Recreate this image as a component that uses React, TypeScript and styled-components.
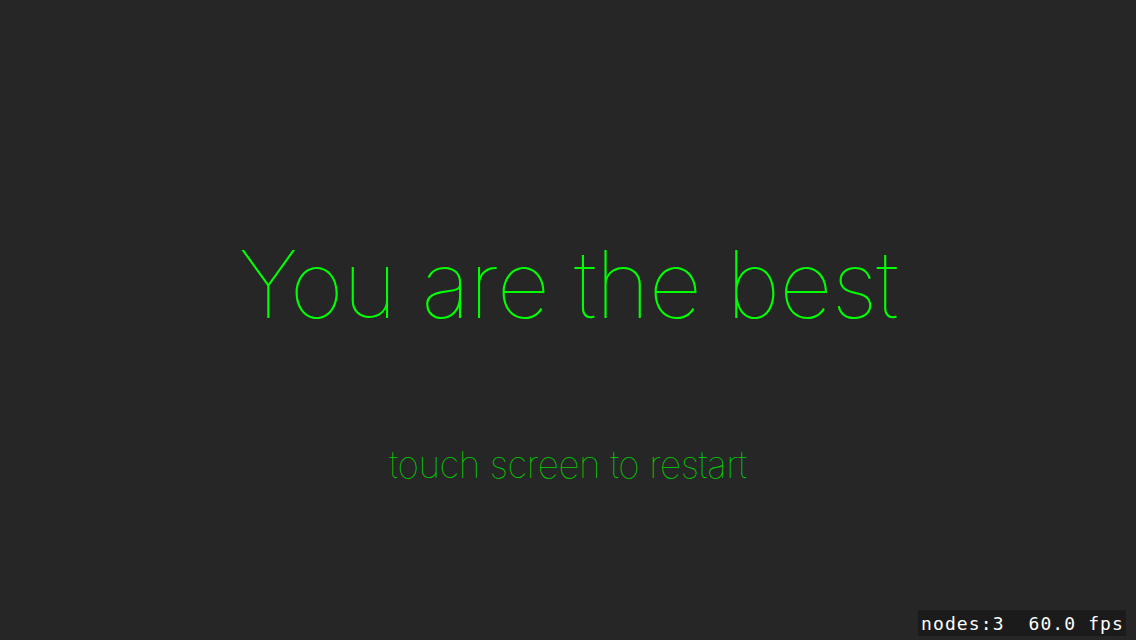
import React from "react";
import styled, { createGlobalStyle } from "styled-components";

const Global = createGlobalStyle`
  html, body { margin: 0; padding: 0; background: #262626; }
  body { width: 1136px; height: 640px; overflow: hidden; }
`;

const Screen = styled.div`
  position: relative;
  width: 1136px;
  height: 640px;
  background: #262626;
  display: flex;
  flex-direction: column;
  align-items: center;
`;

const Title = styled.div`
  margin-top: 228px;
  font-family: Inter, "Liberation Sans", sans-serif;
  font-weight: 100;
  font-size: 93px;
  line-height: 112px;
  color: #00ff00;
  letter-spacing: -1px;
`;

const Subtitle = styled.div`
  margin-top: 102px;
  font-family: Inter, "Liberation Sans", sans-serif;
  font-weight: 100;
  font-size: 37px;
  line-height: 46px;
  color: #00d000;
  letter-spacing: -0.5px;
`;

const Stats = styled.div`
  position: absolute;
  right: 10px;
  bottom: 4px;
  height: 26px;
  display: flex;
  align-items: center;
  background: #1b1b1b;
  color: #ffffff;
  font-family: "DejaVu Sans Mono", monospace;
  font-size: 18px;
  letter-spacing: 1.1px;
  padding: 0 2px 0 3px;
  white-space: pre;
`;

export default function App() {
  return (
    <>
      <Global />
      <Screen>
        <Title>You are the best</Title>
        <Subtitle>touch screen to restart</Subtitle>
        <Stats>nodes:3  60.0 fps</Stats>
      </Screen>
    </>
  );
}
